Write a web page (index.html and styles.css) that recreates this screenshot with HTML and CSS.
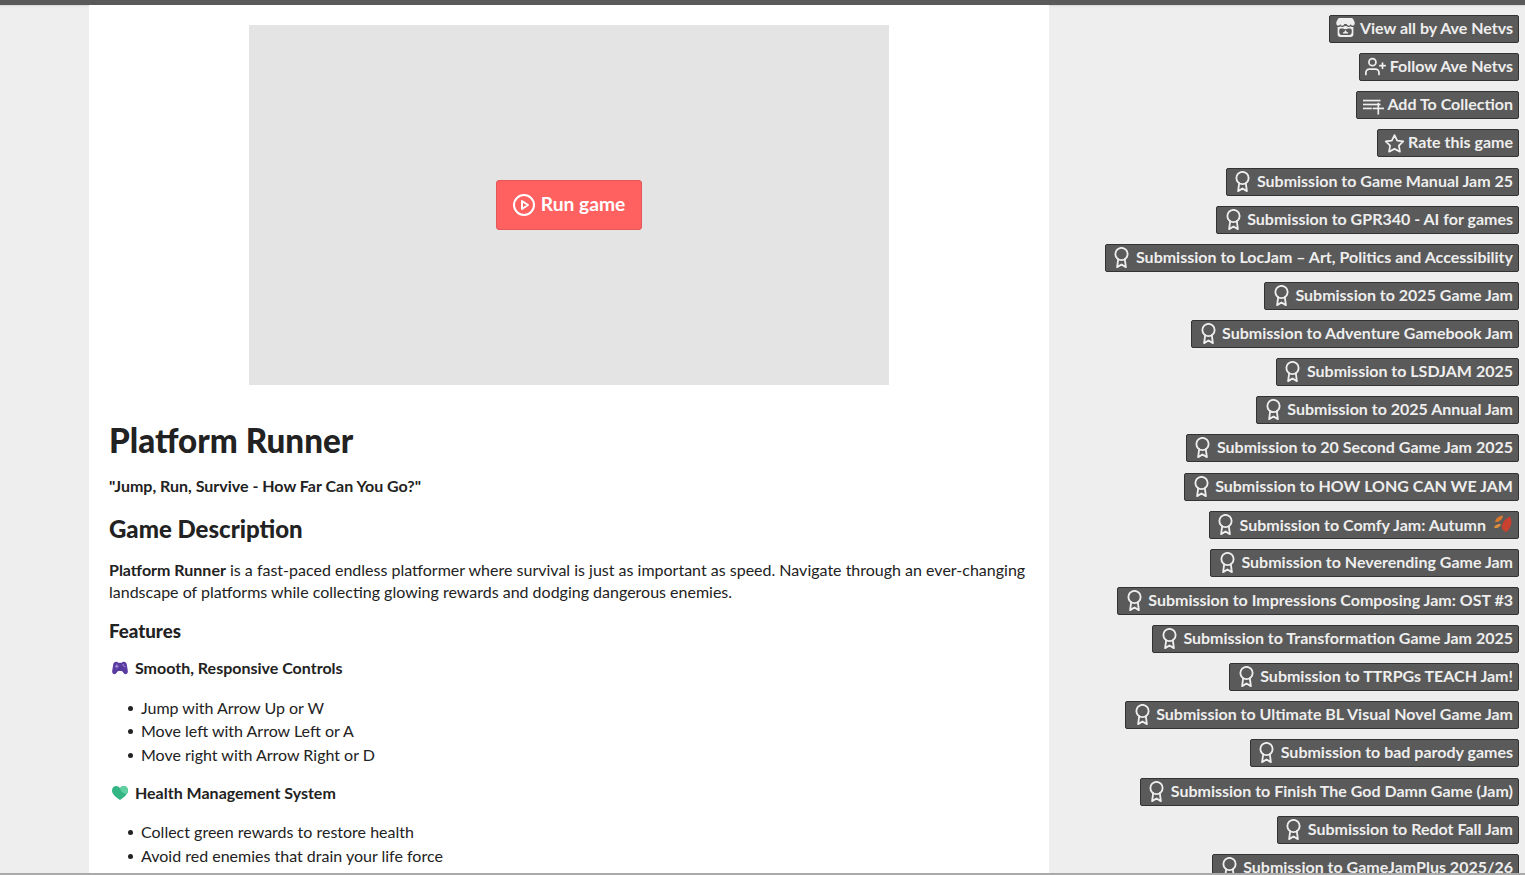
FILE: index.html
```html
<!DOCTYPE html>
<html lang="en">
<head>
  <meta charset="UTF-8" />
  <title>Platform Runner</title>
  <link rel="stylesheet" href="styles.css">
</head>
<body>
  <svg class="defs" width="0" height="0" aria-hidden="true">
    <defs>
      <symbol id="award" viewBox="0 0 24 24" fill="none" stroke="currentColor" stroke-width="2.100" stroke-linecap="round" stroke-linejoin="round">
        <circle cx="12" cy="8" r="7"></circle>
        <polyline points="8.210 13.890 7 23 12 20 17 23 15.790 13.880"></polyline>
      </symbol>
    </defs>
  </svg>

  <div class="top-bar"></div>

  <div class="page">
    <main class="game-column">
      <div class="game-frame">
        <button class="run-button">
          <svg class="run-icon" viewBox="0 0 24 24" fill="none" stroke="currentColor" stroke-width="2" stroke-linecap="round" stroke-linejoin="round">
            <circle cx="12" cy="12" r="10"></circle>
            <polygon points="10 8 16 12 10 16"></polygon>
          </svg>
          Run game
        </button>
      </div>

      <div class="description">
        <h1>Platform Runner</h1>
        <p class="tagline"><strong>"Jump, Run, Survive - How Far Can You Go?"</strong></p>
        <h2>Game Description</h2>
        <p class="intro"><strong>Platform Runner</strong> is a fast-paced endless platformer where survival is just as important as speed. Navigate through an ever-changing landscape of platforms while collecting glowing rewards and dodging dangerous enemies.</p>
        <h3>Features</h3>

        <h4>
          <svg class="emoji" viewBox="0 0 16 14">
            <path fill="#5a3b9f" d="M4.200.8c1 0 1.500.6 2 .9h3.600c.5-.3 1-.9 2-.9 1.700 0 2.600 1 3 2.800l1 6.200c.3 1.900-.8 3.400-2.200 3.400-1.300 0-2-1-2.800-2.200-.4-.6-.8-.9-1.500-.9H6.700c-.7 0-1.100.3-1.500.9C4.400 12 3.700 13.200 2.400 13.200 1 13.200-.1 11.700.2 9.800l1-6.200C1.600 1.800 2.500.8 4.200.8z"></path>
            <rect fill="#a48fe0" x="3" y="4.700" width="3.600" height="1.200"></rect>
            <rect fill="#a48fe0" x="4.200" y="3.500" width="1.200" height="3.600"></rect>
            <circle fill="#a48fe0" cx="11.200" cy="3.900" r=".8"></circle>
            <circle fill="#a48fe0" cx="12.800" cy="5.500" r=".8"></circle>
            <circle fill="#3f2880" cx="8" cy="7" r=".7"></circle>
          </svg>
          Smooth, Responsive Controls
        </h4>
        <ul>
          <li>Jump with Arrow Up or W</li>
          <li>Move left with Arrow Left or A</li>
          <li>Move right with Arrow Right or D</li>
        </ul>

        <h4>
          <svg class="emoji" viewBox="0 0 16 14">
            <path fill="#33b584" d="M8 14C3 10.500 0 7.800 0 4.400 0 1.900 1.900 0 4.200 0 5.800 0 7.200.9 8 2.300 8.800.9 10.200 0 11.800 0 14.100 0 16 1.900 16 4.400c0 3.400-3 6.100-8 9.600z"></path>
            <path fill="#5fd0a2" d="M8 2.300C8.800.9 10.200 0 11.800 0 14.100 0 16 1.900 16 4.400c0 1.300-.5 2.500-1.300 3.600C12 8.200 9 6 8 2.300z"></path>
          </svg>
          Health Management System
        </h4>
        <ul>
          <li>Collect green rewards to restore health</li>
          <li>Avoid red enemies that drain your life force</li>
          <li>Watch your health meter to plan the safest route through danger</li>
        </ul>
      </div>
    </main>

    <aside class="sidebar">
      <a class="side-button">
        <svg class="side-icon" viewBox="0 0 24 24">
          <g transform="translate(0 -3.400) scale(1 1.140)">
            <path fill="currentColor" d="M4.500 3h15c1.300 1 2.500 2.600 3 4.500v1.300c0 1-1 2-2.200 2-1 0-1.900-.7-2.200-1.700-.3 1-1.200 1.700-2.300 1.700S13.600 10 13.400 9.100h-2.800C10.400 10 9.500 10.800 8.200 10.800S6.200 10 5.900 9.100c-.3 1-1.200 1.700-2.200 1.700-1.200 0-2.200-1-2.200-2V7.500c.5-1.900 1.700-3.500 3-4.500z"></path>
            <path fill="currentColor" fill-rule="evenodd" d="M3 12c1.200.2 2.300-.1 3-.8 1.400 1.100 3.500 1.100 5-.1h2c1.500 1.200 3.600 1.200 5 .1.700.7 1.800 1 3 .8v7.500c0 1.600-1.200 2.500-3 2.500H6c-1.800 0-3-.9-3-2.500V12zm3.700 1.500c-1.400 0-1.900 1.100-1.900 3s.9 3.500 2.900 3.500h8.600c2 0 2.900-1.600 2.900-3.500s-.5-3-1.900-3h-2.500c-.6.500-1.700.7-2.800.7s-2.200-.2-2.800-.7H6.700z"></path>
            <path fill="currentColor" d="M12 15l-1.700 2.300H9v1.200h6v-1.200h-1.300L12 15z"></path>
          </g>
        </svg>
        View all by Ave Netvs
      </a>
      <a class="side-button">
        <svg class="side-icon" viewBox="0 0 24 24" fill="none" stroke="currentColor" stroke-width="2" stroke-linecap="round" stroke-linejoin="round">
          <path d="M16 21v-2a4 4 0 0 0-4-4H5a4 4 0 0 0-4 4v2"></path>
          <circle cx="8.500" cy="7" r="4"></circle>
          <line x1="20" y1="8" x2="20" y2="14"></line>
          <line x1="23" y1="11" x2="17" y2="11"></line>
        </svg>
        Follow Ave Netvs
      </a>
      <a class="side-button">
        <svg class="side-icon" viewBox="0 0 24 24" fill="none" stroke="currentColor" stroke-width="1.900">
          <line x1="0" y1="7.500" x2="20" y2="7.500"></line>
          <line x1="0" y1="12" x2="20" y2="12"></line>
          <line x1="0" y1="16.500" x2="10" y2="16.500"></line>
          <line x1="17.500" y1="10" x2="17.500" y2="23.500"></line>
          <line x1="11" y1="16.500" x2="24" y2="16.500"></line>
        </svg>
        Add To Collection
      </a>
      <a class="side-button">
        <svg class="side-icon" viewBox="0 0 24 24" fill="none" stroke="currentColor" stroke-width="2" stroke-linecap="round" stroke-linejoin="round">
          <polygon points="12 3.500 15.090 9.760 22 10.770 17 15.640 18.180 22.520 12 19.270 5.820 22.520 7 15.640 2 10.770 8.910 9.760"></polygon>
        </svg>
        Rate this game
      </a>
      <a class="side-button"><svg class="side-icon"><use href="#award"></use></svg>Submission to Game Manual Jam 25</a>
      <a class="side-button"><svg class="side-icon"><use href="#award"></use></svg>Submission to GPR340 - AI for games</a>
      <a class="side-button"><svg class="side-icon"><use href="#award"></use></svg>Submission to LocJam – Art, Politics and Accessibility</a>
      <a class="side-button"><svg class="side-icon"><use href="#award"></use></svg>Submission to 2025 Game Jam</a>
      <a class="side-button"><svg class="side-icon"><use href="#award"></use></svg>Submission to Adventure Gamebook Jam</a>
      <a class="side-button"><svg class="side-icon"><use href="#award"></use></svg>Submission to LSDJAM 2025</a>
      <a class="side-button"><svg class="side-icon"><use href="#award"></use></svg>Submission to 2025 Annual Jam</a>
      <a class="side-button"><svg class="side-icon"><use href="#award"></use></svg>Submission to 20 Second Game Jam 2025</a>
      <a class="side-button"><svg class="side-icon"><use href="#award"></use></svg>Submission to HOW LONG CAN WE JAM</a>
      <a class="side-button with-leaf">
        <svg class="side-icon"><use href="#award"></use></svg>Submission to Comfy Jam: Autumn
        <svg class="leaf" viewBox="0 0 18 18">
          <path fill="#d9772c" d="M1 7c.5-3.500 3.500-6 8-6.500C9 4 5.500 7.500 1 7z"></path>
          <path fill="#e0913a" d="M0 12.500c1-2.500 4-4 7-3.500-.5 3-4 5-7 3.500z"></path>
          <path fill="#c9412f" d="M16 1.500c2.500 4 2 10.500-3.500 15.500C9 16 7 13.500 8 10c1-4 4-6.500 8-8.500z"></path>
        </svg>
      </a>
      <a class="side-button"><svg class="side-icon"><use href="#award"></use></svg>Submission to Neverending Game Jam</a>
      <a class="side-button"><svg class="side-icon"><use href="#award"></use></svg>Submission to Impressions Composing Jam: OST #3</a>
      <a class="side-button"><svg class="side-icon"><use href="#award"></use></svg>Submission to Transformation Game Jam 2025</a>
      <a class="side-button"><svg class="side-icon"><use href="#award"></use></svg>Submission to TTRPGs TEACH Jam!</a>
      <a class="side-button"><svg class="side-icon"><use href="#award"></use></svg>Submission to Ultimate BL Visual Novel Game Jam</a>
      <a class="side-button"><svg class="side-icon"><use href="#award"></use></svg>Submission to bad parody games</a>
      <a class="side-button"><svg class="side-icon"><use href="#award"></use></svg>Submission to Finish The God Damn Game (Jam)</a>
      <a class="side-button"><svg class="side-icon"><use href="#award"></use></svg>Submission to Redot Fall Jam</a>
      <a class="side-button"><svg class="side-icon"><use href="#award"></use></svg>Submission to GameJamPlus 2025/26</a>
    </aside>
  </div>

  <div class="bottom-line"></div>
</body>
</html>
```

FILE: styles.css
```css
html, body {
  height: 100%;
  overflow: hidden;
}
body {
  margin: 0;
  background-color: #eeeeee;
  font-family: Lato, sans-serif;
  color: #222222;
  display: flex;
  flex-direction: column;
}
.defs {
  position: absolute;
}
.top-bar {
  height: 5px;
  flex: none;
  background-color: #5a5a5a;
  box-shadow: 0 1px 2px rgba(0,0,0,0.1);
}
.page {
  flex: 1;
  min-height: 0;
  display: flex;
  overflow: hidden;
}
.game-column {
  width: 960px;
  margin-left: 89px;
  flex: none;
  background-color: #fff;
}
.game-frame {
  width: 640px;
  height: 360px;
  margin: 20px auto 0;
  background-color: #e4e4e4;
  display: flex;
  align-items: center;
  justify-content: center;
}
.run-button {
  display: flex;
  align-items: center;
  gap: 5px;
  height: 50px;
  padding: 0 16px 4px 15px;
  background-color: #ff6161;
  border: 1px solid #e55757;
  border-radius: 3px;
  color: #fff;
  font-family: Lato, sans-serif;
  font-size: 19.200px;
  font-weight: 700;
}
.run-icon {
  width: 24px;
  height: 24px;
  margin-top: 4px;
}
.description {
  padding: 0 20px;
  font-size: 16px;
  line-height: 22px;
}
h1 {
  margin: 37px 0 0;
  font-size: 33.200px;
  line-height: 36px;
  font-weight: 900;
}
.tagline {
  margin: 17px 0 0;
}
h2 {
  margin: 17px 0 0;
  font-size: 24px;
  line-height: 30px;
  font-weight: 900;
}
.intro {
  margin: 15px 0 0;
}
h3 {
  margin: 16px 0 0;
  font-size: 18.720px;
  line-height: 24px;
  font-weight: 900;
}
h4 {
  margin: 13px 0 0;
  font-size: 16px;
  line-height: 24px;
  display: flex;
  align-items: center;
  gap: 7px;
}
ul + h4 {
  margin: 14px 0 -0.400px;
}
.emoji {
  width: 16px;
  height: 14px;
  margin-left: 3px;
  flex: none;
}
ul {
  margin: 15.700px 0 0;
  padding-left: 32px;
  list-style: none;
}
li {
  line-height: 23.700px;
}
li::before {
  content: "";
  display: inline-block;
  width: 5px;
  height: 5px;
  margin: 0 8px 0 -13px;
  border-radius: 50%;
  background-color: #222222;
  vertical-align: 3px;
}
.sidebar {
  flex: 1;
  min-width: 0;
  display: flex;
  flex-direction: column;
  align-items: flex-end;
  gap: 10.140px;
  padding: 10px 6px 0 0;
}
.side-button {
  flex: none;
  box-sizing: border-box;
  display: flex;
  align-items: center;
  height: 28px;
  padding: 0 5px 3px 4px;
  background-color: #5a5a5a;
  border: 1px solid #333333;
  border-radius: 2px;
  color: #eeeeee;
  font-size: 16px;
  font-weight: 700;
  white-space: nowrap;
}
.side-button.with-leaf {
  padding-bottom: 1px;
}
.side-icon {
  width: 21px;
  height: 21px;
  margin: 2px 3.500px 0 1.500px;
  flex: none;
  align-self: flex-start;
  overflow: visible;
}
.leaf {
  width: 18px;
  height: 18px;
  margin-left: 8px;
  margin-right: 1px;
  flex: none;
}
.bottom-line {
  position: fixed;
  left: 0;
  right: 0;
  bottom: 0;
  height: 2px;
  background-color: #aaaaaa;
}
```
